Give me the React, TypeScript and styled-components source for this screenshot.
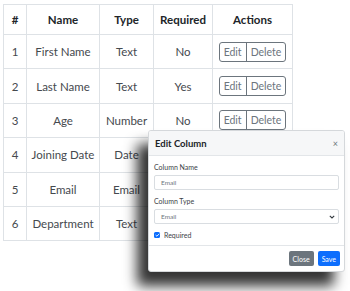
import styled, { createGlobalStyle } from 'styled-components';

const GlobalStyle = createGlobalStyle`
  html, body {
    margin: 0;
    padding: 0;
    background: #fff;
  }
  body {
    font-family: Lato, 'Open Sans', sans-serif;
    color: #212529;
  }
`;

const columns = [
  { name: 'First Name', type: 'Text', required: false },
  { name: 'Last Name', type: 'Text', required: true },
  { name: 'Age', type: 'Number', required: false },
  { name: 'Joining Date', type: 'Date', required: false },
  { name: 'Email', type: 'Email', required: false },
  { name: 'Department', type: 'Text', required: false },
];

const widths = [23, 73, 54, 59, 80];

const App = () => {
  return (
    <Page>
      <GlobalStyle />
      <Table>
        <colgroup>
          {widths.map((w, i) => (
            <col key={i} style={{ width: w }} />
          ))}
        </colgroup>
        <thead>
          <tr>
            <Th>#</Th>
            <Th>Name</Th>
            <Th>Type</Th>
            <Th>Required</Th>
            <Th>Actions</Th>
          </tr>
        </thead>
        <tbody>
          {columns.map((c, i) => (
            <tr key={c.name}>
              <Td>{i + 1}</Td>
              <Td>{c.name}</Td>
              <Td>{c.type}</Td>
              <Td>{c.required ? 'Yes' : 'No'}</Td>
              <Td>
                <BtnGroup>
                  <OutlineBtn>Edit</OutlineBtn>
                  <OutlineBtn>Delete</OutlineBtn>
                </BtnGroup>
              </Td>
            </tr>
          ))}
        </tbody>
      </Table>

      <Modal>
        <ModalHeader>
          <ModalTitle>Edit Column</ModalTitle>
          <CloseX>×</CloseX>
        </ModalHeader>
        <ModalBody>
          <Label>Column Name</Label>
          <Field>Email</Field>
          <Label $top={6}>Column Type</Label>
          <Field>
            Email
            <svg width="6" height="4" viewBox="0 0 6 4">
              <path d="M0.8 0.8 L3 3 L5.2 0.8" fill="none" stroke="#343a40" strokeWidth="1.1" />
            </svg>
          </Field>
          <CheckRow>
            <CheckBox>
              <svg width="5" height="4" viewBox="0 0 5 4">
                <path d="M0.6 2 L1.9 3.2 L4.4 0.7" fill="none" stroke="#fff" strokeWidth="0.9" />
              </svg>
            </CheckBox>
            Required
          </CheckRow>
        </ModalBody>
        <ModalFooter>
          <FooterBtn $variant="secondary">Close</FooterBtn>
          <FooterBtn $variant="primary">Save</FooterBtn>
        </ModalFooter>
      </Modal>
    </Page>
  );
};

export default App;

const Page = styled.div`
  position: relative;
  width: 350px;
  height: 291px;
  padding: 4px 0 0 3px;
  box-sizing: border-box;
  overflow: hidden;
`;

const Table = styled.table`
  border-collapse: collapse;
  table-layout: fixed;
  width: 290px;
  font-size: 11.5px;

  tbody tr {
    height: 34.4px;
  }
  thead tr {
    height: 30px;
  }
`;

const Th = styled.th`
  border: 1px solid #dee2e6;
  font-weight: 700;
  color: #212529;
  text-align: center;
  padding: 0;
`;

const Td = styled.td`
  border: 1px solid #dee2e6;
  color: #45494e;
  text-align: center;
  padding: 0;
`;

const BtnGroup = styled.div`
  display: inline-flex;
  border: 1px solid #6c757d;
  border-radius: 3px;
  height: 20px;
  box-sizing: border-box;
  overflow: hidden;
  vertical-align: middle;
`;

const OutlineBtn = styled.span`
  display: flex;
  align-items: center;
  padding: 0 4px;
  font-size: 10.5px;
  color: #6c757d;

  & + & {
    border-left: 1px solid #6c757d;
  }
`;

const Modal = styled.div`
  position: absolute;
  left: 148px;
  top: 130px;
  width: 197px;
  height: 142px;
  background: #fff;
  border: 1px solid #d5d8db;
  border-radius: 3px;
  box-sizing: border-box;
  box-shadow: -11px 14px 13px rgba(0, 0, 0, 0.8);
  display: flex;
  flex-direction: column;
  overflow: hidden;
`;

const ModalHeader = styled.div`
  height: 25px;
  background: #f6f7f8;
  border-bottom: 1px solid #e3e6e9;
  display: flex;
  align-items: center;
  justify-content: space-between;
  padding: 0 6px 0 6px;
  box-sizing: border-box;
`;

const ModalTitle = styled.div`
  font-size: 9.5px;
  font-weight: 700;
  color: #212529;
`;

const CloseX = styled.div`
  font-size: 9px;
  color: #6c757d;
`;

const ModalBody = styled.div`
  flex: 1;
  padding: 6px 5px 0 5px;
  display: flex;
  flex-direction: column;
  border-bottom: 1px solid #e3e6e9;
`;

const Label = styled.div<{ $top?: number }>`
  font-size: 7px;
  color: #3d4247;
  line-height: 10px;
  margin-top: ${(p) => p.$top ?? 0}px;
  margin-bottom: 3px;
`;

const Field = styled.div`
  height: 15px;
  border: 1px solid #d9dde1;
  border-radius: 2px;
  box-sizing: border-box;
  display: flex;
  align-items: center;
  justify-content: space-between;
  padding: 0 3px 0 6px;
  font-size: 6.5px;
  color: #6c757d;
`;

const CheckRow = styled.div`
  display: flex;
  align-items: center;
  gap: 4px;
  margin-top: 7px;
  font-size: 7px;
  color: #3d4247;
`;

const CheckBox = styled.span`
  width: 6px;
  height: 6px;
  border-radius: 1.5px;
  background: #0d6efd;
  display: flex;
  align-items: center;
  justify-content: center;
`;

const ModalFooter = styled.div`
  height: 25px;
  display: flex;
  align-items: center;
  justify-content: flex-end;
  gap: 4px;
  padding-right: 4px;
`;

const FooterBtn = styled.div<{ $variant: 'primary' | 'secondary' }>`
  height: 15px;
  padding: 0 4px;
  border-radius: 2px;
  display: flex;
  align-items: center;
  font-size: 7px;
  color: #fff;
  background: ${(p) => (p.$variant === 'primary' ? '#0d6efd' : '#6c757d')};
`;
